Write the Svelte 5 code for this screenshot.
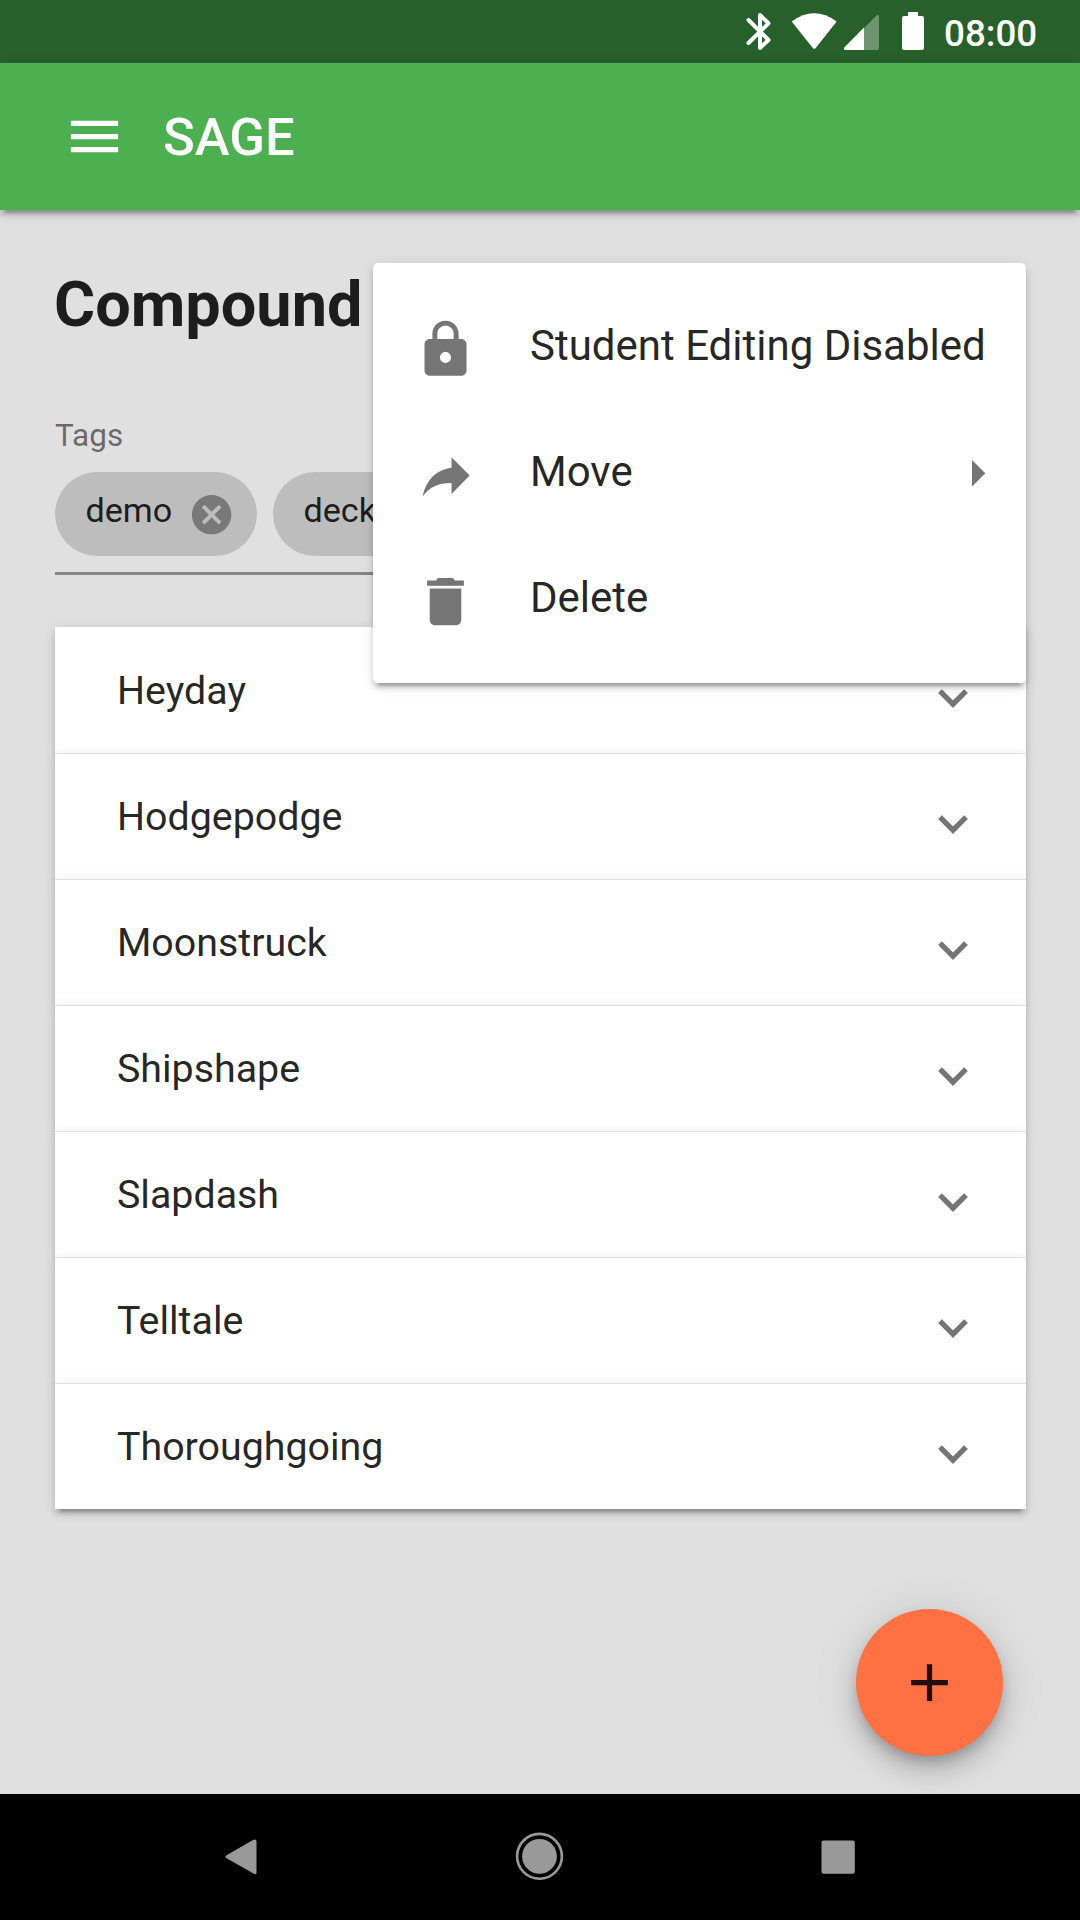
<script>
  const tags = ['demo', 'deck'];
  const cards = ['Heyday', 'Hodgepodge', 'Moonstruck', 'Shipshape', 'Slapdash', 'Telltale', 'Thoroughgoing'];
  const menu = [
    {
      label: 'Student Editing Disabled',
      icon: 'M18 8h-1V6c0-2.76-2.24-5-5-5S7 3.24 7 6v2H6c-1.1 0-2 .9-2 2v10c0 1.1.9 2 2 2h12c1.1 0 2-.9 2-2V10c0-1.1-.9-2-2-2zm-6 9.1a2.1 2.1 0 1 1 0-4.2 2.1 2.1 0 0 1 0 4.2zM15.1 8H8.9V6c0-1.71 1.39-3.1 3.1-3.1s3.1 1.39 3.1 3.1v2z'
    },
    {
      label: 'Move',
      icon: 'M14.3 9V5l6.9 7-6.9 7v-4.1c-5 0-8.5 1.6-11 5.1 1-5 4-10 11-11z',
      submenu: true
    },
    {
      label: 'Delete',
      icon: 'M6 19c0 1.1.9 2 2 2h8c1.1 0 2-.9 2-2V7H6v12zM19 4h-3.5l-.3-.6c-.2-.3-.5-.4-.9-.4H9.7c-.4 0-.7.1-.9.4L8.500 4H5v2h14V4z'
    }
  ];
</script>

<div class="screen">
  <header class="status">
    <svg class="indicators" viewBox="0 0 190 63">
      <path d="M8.500 20 28.500 40 20 48V15L28.500 23.300 8.500 43" fill="none" stroke="#fff" stroke-width="4" stroke-linecap="round" stroke-linejoin="round" />
      <path d="M51.700 21.500Q74 5 96.700 21.500L75.500 48.200Q74.300 49.500 73 48.200Z" fill="#fff" />
      <path d="M104 48.500 136.500 15.500Q139 14 139 17V48Q139 50 137 50H105Q103.500 50 104 48.500Z" fill="#fff" opacity=".33" />
      <path d="M104.300 47.500 124 27.500V50H105.500Q103 49.500 104.300 47.500Z" fill="#fff" />
      <path d="M168 12h10v4h4q2 0 2 2v30q0 2-2 2h-18q-2 0-2-2V18q0-2 2-2h4z" fill="#fff" />
    </svg>
    <span class="clock">08:00</span>
  </header>

  <div class="toolbar">
    <svg class="icon" viewBox="0 0 24 24"><path d="M3 18h18v-2H3v2zm0-5h18v-2H3v2zm0-7v2h18V6H3z" /></svg>
    <span class="brand">SAGE</span>
  </div>

  <main>
    <h1>Compound</h1>
    <div class="label">Tags</div>
    <div class="chips">
      {#each tags as tag}
        <div class="chip">
          <span>{tag}</span>
          <svg viewBox="0 0 24 24"><path d="M12 2C6.470 2 2 6.470 2 12s4.470 10 10 10 10-4.470 10-10S17.530 2 12 2zm5 13.590L15.590 17 12 13.410 8.410 17 7 15.590 10.590 12 7 8.410 8.410 7 12 10.590 15.590 7 17 8.410 13.410 12 17 15.590z" /></svg>
        </div>
      {/each}
    </div>
    <div class="list">
      {#each cards as card}
        <div class="row">
          <span>{card}</span>
          <svg viewBox="0 0 30 20"><path d="M2 2.200 15 15.200 28 2.200" /></svg>
        </div>
      {/each}
    </div>

    <div class="menu">
      {#each menu as item}
        <div class="item">
          <svg class="icon" viewBox="0 0 24 24"><path fill-rule="evenodd" d={item.icon} /></svg>
          <span>{item.label}</span>
          {#if item.submenu}
            <svg class="caret" viewBox="0 0 13 26"><path d="M0 0 13 13 0 26z" /></svg>
          {/if}
        </div>
      {/each}
    </div>

    <div class="fab">
      <svg class="icon" viewBox="0 0 24 24"><path d="M19 13h-6v6h-2v-6H5v-2h6V5h2v6h6v2z" /></svg>
    </div>
  </main>

  <nav>
    <svg viewBox="0 0 50 50"><path d="M11 24 37 9Q40.500 7.500 40.500 10.500V41.500Q40.500 44 37.500 42.500L11 27.500Q7.500 25.800 11 24Z" /></svg>
    <svg viewBox="0 0 50 50"><circle cx="24.500" cy="25.300" r="17.400" /><circle class="ring" cx="24.500" cy="25.300" r="22.400" /></svg>
    <svg viewBox="0 0 50 50"><rect x="8.500" y="9.400" width="33.300" height="33.300" rx="2" /></svg>
  </nav>
</div>

<style>
  :global(body) {
    margin: 0;
  }
  .screen {
    width: 1080px;
    height: 1920px;
    display: flex;
    flex-direction: column;
    overflow: hidden;
    background: #e0e0e0;
    color: rgba(0, 0, 0, 0.87);
    font-family: Roboto, sans-serif;
  }
  svg {
    display: block;
    flex: none;
  }
  .icon {
    width: 63px;
    height: 63px;
    fill: currentColor;
  }
  .status {
    height: 63px;
    flex: none;
    display: flex;
    justify-content: flex-end;
    padding-right: 42px;
    background: #28602b;
    color: #fff;
  }
  .indicators {
    width: 190px;
    height: 63px;
    margin-right: 14px;
  }
  .clock {
    width: 94px;
    font-size: 36.75px;
    font-weight: 500;
    line-height: 68px;
    white-space: nowrap;
  }
  .toolbar {
    position: relative;
    z-index: 1;
    height: 147px;
    flex: none;
    box-sizing: border-box;
    display: flex;
    align-items: center;
    gap: 37px;
    padding-left: 63px;
    background: #4caf50;
    color: #fff;
    box-shadow: 0 8px 3px -5px rgba(0, 0, 0, 0.2), 0 5px 5px 0 rgba(0, 0, 0, 0.14), 0 3px 13px 0 rgba(0, 0, 0, 0.12);
  }
  .brand {
    font-size: 52.5px;
    font-weight: 500;
  }
  main {
    position: relative;
    height: 1584px;
    flex: none;
    box-sizing: border-box;
    padding: 53px 54px 0 55px;
  }
  h1 {
    margin: 0 0 0 -1px;
    height: 152px;
    font-size: 63px;
    font-weight: 700;
    line-height: 84px;
  }
  .label {
    height: 57px;
    font-size: 31.5px;
    line-height: 42px;
    color: rgba(0, 0, 0, 0.54);
  }
  .chips {
    height: 103px;
    box-sizing: border-box;
    display: flex;
    align-items: flex-start;
    gap: 16px;
    padding-top: 0.4px;
    border-bottom: 3px solid #868686;
  }
  .chip {
    height: 84px;
    box-sizing: border-box;
    display: flex;
    align-items: center;
    gap: 15.5px;
    padding: 0 22px 0 30.5px;
    border-radius: 42px;
    background: #bdbdbd;
    font-size: 34.125px;
  }
  .chip span {
    padding-bottom: 8px;
  }
  .chip svg {
    width: 47.25px;
    height: 47.25px;
    fill: rgba(0, 0, 0, 0.36);
  }
  .list {
    margin-top: 52px;
  }
  .row {
    height: 126px;
    box-sizing: border-box;
    display: flex;
    align-items: center;
    justify-content: space-between;
    padding: 0 58px 0 62px;
    border-top: 1px solid #e0e0e0;
    background: #fff;
    font-size: 39.375px;
    box-shadow: 0 8px 3px -5px rgba(0, 0, 0, 0.2), 0 5px 5px 0 rgba(0, 0, 0, 0.14), 0 3px 13px 0 rgba(0, 0, 0, 0.12);
  }
  .row:first-child {
    border-top-color: #fff;
  }
  .row span {
    line-height: 46px;
  }
  .row svg {
    width: 30px;
    height: 20px;
    margin-top: 17px;
    fill: none;
    stroke: #757575;
    stroke-width: 5.25px;
  }
  .menu {
    position: absolute;
    top: 53px;
    left: 373px;
    width: 653px;
    height: 419.5px;
    box-sizing: border-box;
    padding: 21px 42px 20.5px 41px;
    border-radius: 5px;
    background: #fff;
    box-shadow: 0 8px 3px -5px rgba(0, 0, 0, 0.2), 0 5px 5px 0 rgba(0, 0, 0, 0.14), 0 3px 13px 0 rgba(0, 0, 0, 0.12);
  }
  .item {
    height: 126px;
    display: flex;
    align-items: center;
    font-size: 42px;
    white-space: nowrap;
  }
  .item span {
    padding-bottom: 4px;
  }
  .item .icon {
    margin: 5px 53px 0 0;
    color: #757575;
  }
  .caret {
    width: 13.3px;
    height: 26.6px;
    margin: 0 -1px 0 auto;
    fill: #757575;
  }
  .fab {
    position: absolute;
    top: 1399px;
    left: 855.6px;
    width: 147px;
    height: 147px;
    display: grid;
    place-items: center;
    border-radius: 50%;
    background: #ff7043;
    box-shadow: 0 8px 13px -3px rgba(0, 0, 0, 0.2), 0 16px 26px 0 rgba(0, 0, 0, 0.14), 0 3px 47px 0 rgba(0, 0, 0, 0.12);
  }
  nav {
    position: relative;
    z-index: 1;
    height: 126px;
    flex: none;
    box-sizing: border-box;
    display: flex;
    justify-content: space-between;
    padding: 37px 217px 0 216px;
    background: #000;
  }
  nav svg {
    width: 50px;
    height: 50px;
    fill: #999;
  }
  nav .ring {
    fill: none;
    stroke: #999;
    stroke-width: 2.6px;
  }
</style>
